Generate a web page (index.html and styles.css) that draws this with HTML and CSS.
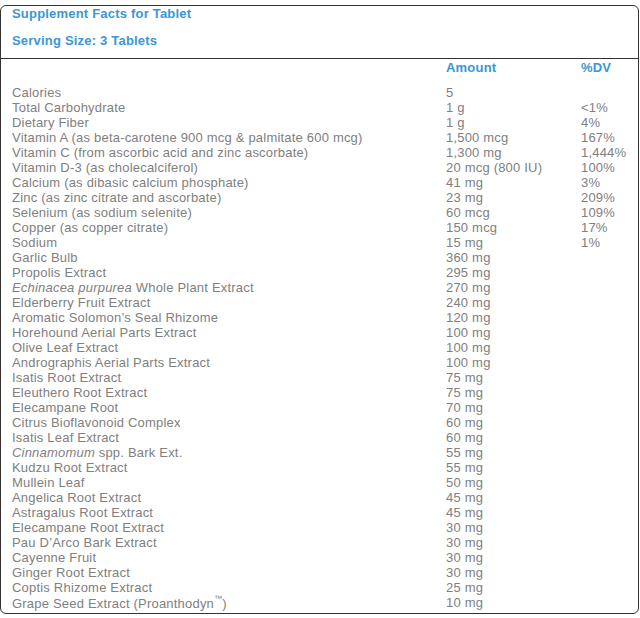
FILE: index.html
```html
<!DOCTYPE html>
<html>
<head>
<meta charset="utf-8">
<link rel="stylesheet" href="styles.css">
</head>
<body>
<div class="panel">
  <div class="panel-head">
    <div class="title">Supplement Facts for Tablet</div>
    <div class="serving">Serving Size: 3 Tablets</div>
  </div>
  <div class="facts">
    <div class="col-head"></div><div class="col-head">Amount</div><div class="col-head">%DV</div>
    <div class="gap"></div>
    <div>Calories</div><div>5</div><div></div>
    <div>Total Carbohydrate</div><div>1 g</div><div>&lt;1%</div>
    <div>Dietary Fiber</div><div>1 g</div><div>4%</div>
    <div>Vitamin A (as beta-carotene 900 mcg &amp; palmitate 600 mcg)</div><div>1,500 mcg</div><div>167%</div>
    <div>Vitamin C (from ascorbic acid and zinc ascorbate)</div><div>1,300 mg</div><div>1,444%</div>
    <div>Vitamin D-3 (as cholecalciferol)</div><div>20 mcg (800 IU)</div><div>100%</div>
    <div>Calcium (as dibasic calcium phosphate)</div><div>41 mg</div><div>3%</div>
    <div>Zinc (as zinc citrate and ascorbate)</div><div>23 mg</div><div>209%</div>
    <div>Selenium (as sodium selenite)</div><div>60 mcg</div><div>109%</div>
    <div>Copper (as copper citrate)</div><div>150 mcg</div><div>17%</div>
    <div>Sodium</div><div>15 mg</div><div>1%</div>
    <div>Garlic Bulb</div><div>360 mg</div><div></div>
    <div>Propolis Extract</div><div>295 mg</div><div></div>
    <div><em>Echinacea purpurea</em> Whole Plant Extract</div><div>270 mg</div><div></div>
    <div>Elderberry Fruit Extract</div><div>240 mg</div><div></div>
    <div>Aromatic Solomon’s Seal Rhizome</div><div>120 mg</div><div></div>
    <div>Horehound Aerial Parts Extract</div><div>100 mg</div><div></div>
    <div>Olive Leaf Extract</div><div>100 mg</div><div></div>
    <div>Andrographis Aerial Parts Extract</div><div>100 mg</div><div></div>
    <div>Isatis Root Extract</div><div>75 mg</div><div></div>
    <div>Eleuthero Root Extract</div><div>75 mg</div><div></div>
    <div>Elecampane Root</div><div>70 mg</div><div></div>
    <div>Citrus Bioflavonoid Complex</div><div>60 mg</div><div></div>
    <div>Isatis Leaf Extract</div><div>60 mg</div><div></div>
    <div><em>Cinnamomum</em> spp. Bark Ext.</div><div>55 mg</div><div></div>
    <div>Kudzu Root Extract</div><div>55 mg</div><div></div>
    <div>Mullein Leaf</div><div>50 mg</div><div></div>
    <div>Angelica Root Extract</div><div>45 mg</div><div></div>
    <div>Astragalus Root Extract</div><div>45 mg</div><div></div>
    <div>Elecampane Root Extract</div><div>30 mg</div><div></div>
    <div>Pau D’Arco Bark Extract</div><div>30 mg</div><div></div>
    <div>Cayenne Fruit</div><div>30 mg</div><div></div>
    <div>Ginger Root Extract</div><div>30 mg</div><div></div>
    <div>Coptis Rhizome Extract</div><div>25 mg</div><div></div>
    <div>Grape Seed Extract (Proanthodyn<sup>™</sup>)</div><div>10 mg</div><div></div>
  </div>
</div>
</body>
</html>
```
FILE: styles.css
```css
html, body {
  margin: 0;
  padding: 0;
  background: #fff;
}
body {
  font-family: "Liberation Sans", Arial, sans-serif;
  font-size: 13px;
  letter-spacing: 0.2px;
  color: #808080;
}
.panel {
  margin-top: 5px;
  width: 637px;
  height: 607px;
  border: 1px solid #333;
  border-radius: 6px;
  overflow: hidden;
}
.panel-head {
  padding: 0 11px;
  border-bottom: 1px solid #333;
  box-sizing: border-box;
  height: 53px;
}
.title, .serving {
  color: #3a97d4;
  font-weight: bold;
  line-height: 16px;
  letter-spacing: 0.2px;
}
.serving {
  margin-top: 11px;
}
.facts {
  display: grid;
  grid-template-columns: 434px 135px 1fr;
  padding: 1px 11px 0;
  line-height: 15px;
}
.col-head {
  color: #3a97d4;
  font-weight: bold;
  line-height: 16px;
}
.gap {
  grid-column: 1 / -1;
  height: 9px;
}
em {
  font-style: italic;
}
sup {
  font-size: 8px;
  line-height: 8px;
  vertical-align: 7px;
}
```
